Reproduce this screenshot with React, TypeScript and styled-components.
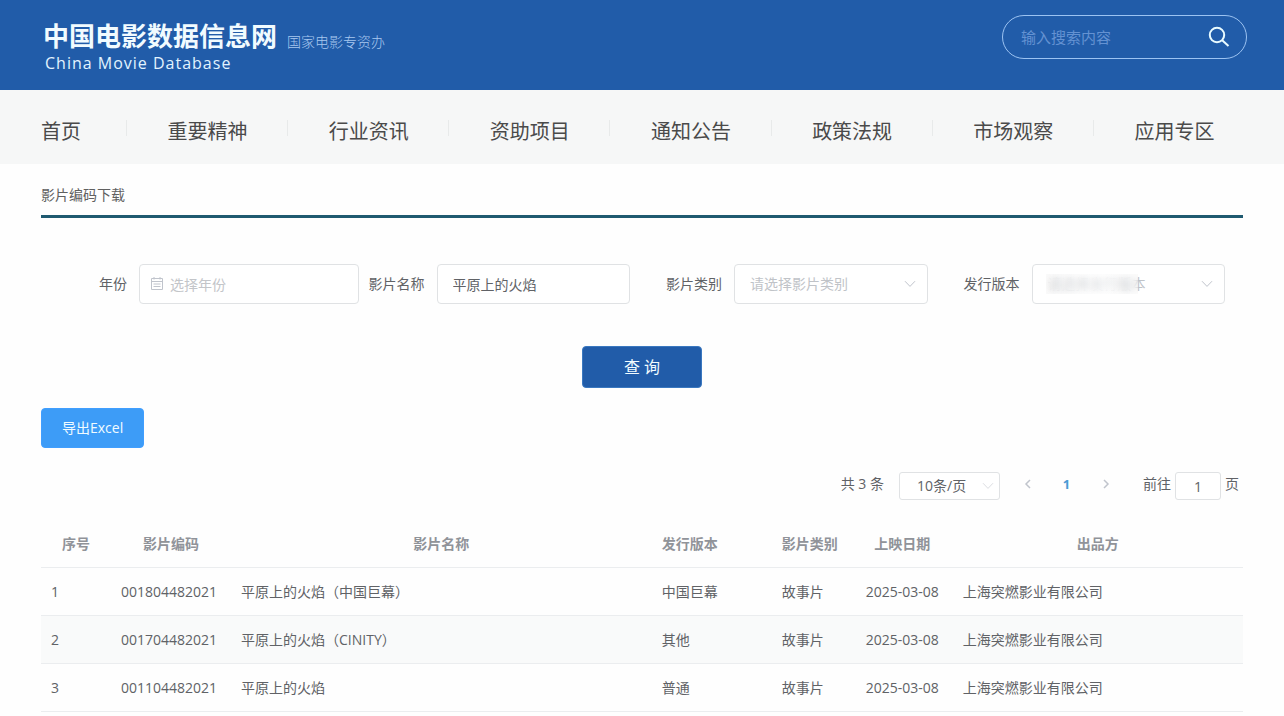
import React from 'react';
import styled, { createGlobalStyle } from 'styled-components';

const GlobalStyle = createGlobalStyle`
  *, *::before, *::after { box-sizing: border-box; }
  body {
    margin: 0;
    background: #fefefe;
    color: #606266;
    font: 14px/20px "Open Sans", "Noto Sans CJK SC", sans-serif;
  }
  button, input, select { font: inherit; color: inherit; margin: 0; }
`;

const Header = styled.header`
  display: flex;
  justify-content: space-between;
  align-items: flex-start;
  height: 90px;
  padding: 15px 37px 0 43px;
  background: #215ca9;
  color: #fff;
`;

const Brand = styled.div`
  display: grid;
  grid-template-columns: auto auto;
  column-gap: 10px;
  align-items: end;
  padding-top: 4px;
`;

const SiteName = styled.h1`
  margin: 0;
  font-size: 26px;
  line-height: 34px;
  font-weight: 700;
  color: #f1fbff;
`;

const Office = styled.span`
  line-height: 22px;
  color: #a9c8ef;
  font-weight: 300;
`;

const EnglishName = styled.span`
  padding-left: 2px;
  font-size: 16px;
  line-height: 20px;
  letter-spacing: 1px;
  color: #e2f3ff;
`;

const SearchBox = styled.form`
  display: flex;
  align-items: center;
  width: 245px;
  height: 44px;
  padding: 0 15px 0 18px;
  border: 1px solid #9cc3f2;
  border-radius: 22px;
`;

const SearchInput = styled.input`
  flex: 1;
  min-width: 0;
  padding: 0;
  border: 0;
  outline: 0;
  background: none;
  font-size: 15px;
  &::placeholder { color: #6492d2; opacity: 1; }
`;

const SearchButton = styled.button`
  display: flex;
  padding: 0;
  border: 0;
  background: none;
  color: #e9fbff;
`;

const Nav = styled.nav`
  display: grid;
  grid-template-columns: 86px repeat(7, 1fr);
  align-items: center;
  height: 74px;
  padding: 10px 29px 0 41px;
  background: #f6f7f7;
`;

const NavLink = styled.a`
  position: relative;
  text-align: center;
  text-decoration: none;
  font-size: 20px;
  line-height: 28px;
  color: #4a4a4a;
  &:first-child { text-align: left; }
  &:not(:last-child)::after {
    content: "";
    position: absolute;
    top: 2px;
    right: 0;
    width: 1px;
    height: 16px;
    background: #e8eaea;
  }
`;

const Main = styled.main`
  padding: 21px 41px 0;
`;

const PageTitle = styled.h2`
  margin: 0;
  padding-bottom: 10px;
  border-bottom: 3px solid #1f5a70;
  font-size: 14px;
  line-height: 20px;
  font-weight: 400;
  color: #606060;
`;

const Filters = styled.form`
  display: grid;
  grid-template-columns: repeat(4, minmax(0, 1fr));
  row-gap: 42px;
  margin-top: 46px;
  padding-right: 12px;
`;

const Field = styled.div`
  display: flex;
  align-items: center;
  padding-right: 6px;
`;

const Label = styled.label`
  flex: 0 0 98px;
  padding-right: 12px;
  text-align: right;
  white-space: nowrap;
`;

const Control = styled.div<{ $minWidth?: number }>`
  position: relative;
  flex: 1 0 auto;
  width: 0;
  min-width: ${p => (p.$minWidth ? `${p.$minWidth}px` : '0')};
`;

const TextInput = styled.input<{ $inset?: number }>`
  display: block;
  width: 100%;
  height: 40px;
  padding: 0 15px 0 ${p => p.$inset ?? 15}px;
  border: 1px solid #e0e2e4;
  border-radius: 4px;
  outline: 0;
  background: #fff;
  &::placeholder { color: #c3c5c9; opacity: 1; }
`;

const Select = styled.select<{ $small?: boolean }>`
  display: block;
  width: 100%;
  height: ${p => (p.$small ? 28 : 40)}px;
  padding: 0 ${p => (p.$small ? 17 : 15)}px;
  appearance: none;
  border: 1px solid #e0e2e4;
  border-radius: ${p => (p.$small ? 3 : 4)}px;
  outline: 0;
  background: #fff;
  color: ${p => (p.$small ? '#606266' : '#c0c3c8')};
`;

const ControlIcon = styled.svg<{ $side: 'left' | 'right'; $offset: number; $faint?: boolean }>`
  position: absolute;
  top: 0;
  bottom: 0;
  margin: auto 0;
  ${p => p.$side}: ${p => p.$offset}px;
  fill: none;
  stroke: ${p => (p.$faint ? '#dcdee2' : '#c0c4cc')};
  pointer-events: none;
`;

const Redaction = styled.span`
  position: absolute;
  top: 10px;
  left: 14px;
  width: 92px;
  height: 20px;
  background: linear-gradient(90deg, #eeeeee44, #ffffff66 60%, #eeeeee33);
  backdrop-filter: blur(3px);
  pointer-events: none;
`;

const QueryButton = styled.button`
  grid-column: 1 / -1;
  justify-self: center;
  width: 120px;
  height: 42px;
  margin-left: 12px;
  border: 1px solid #3a78c0;
  border-radius: 4px;
  background: #215ca9;
  font-size: 16px;
  color: #f1fbff;
`;

const ExportButton = styled.button`
  display: block;
  height: 40px;
  margin-top: 20px;
  padding: 0 20px;
  border: 1px solid #409eff;
  border-radius: 4px;
  background: #3d9cf7;
  color: #f1fbff;
`;

const Pagination = styled.div`
  display: flex;
  justify-content: flex-end;
  align-items: center;
  height: 28px;
  margin-top: 24px;
  padding-right: 4px;
  line-height: 24px;
`;

const Total = styled.span`
  height: 28px;
`;

const PageSize = styled.div`
  position: relative;
  width: 101px;
  margin: 0 8px 0 15px;
`;

const PagerButton = styled.button<{ $current?: boolean }>`
  display: flex;
  align-items: center;
  justify-content: center;
  width: 39px;
  height: 28px;
  padding: 0 0 4px;
  border: 0;
  background: none;
  font-size: 13px;
  font-weight: 700;
  color: ${p => (p.$current ? '#4a9bd4' : '#c0c4cc')};
`;

const Jump = styled.label`
  display: flex;
  align-items: flex-start;
  gap: 4px;
  height: 28px;
  margin-left: 18px;
`;

const JumpInput = styled.input`
  width: 46px;
  height: 28px;
  padding: 0;
  border: 1px solid #e0e2e4;
  border-radius: 3px;
  background: #fff;
  text-align: center;
`;

const Table = styled.table`
  width: 100%;
  margin-top: 20px;
  table-layout: fixed;
  border-collapse: separate;
  border-spacing: 0;
`;

const Cell = styled.td<{ $align?: 'left' | 'center' }>`
  height: 48px;
  padding: 0 10px;
  border-bottom: 1px solid #ebedef;
  text-align: ${p => p.$align ?? 'left'};
  white-space: nowrap;
`;

const HeadCell = styled(Cell)`
  font-weight: 700;
  color: #909399;
`;

const Row = styled.tr`
  &:nth-child(even) { background: #f9fafa; }
`;

const navItems = ['首页', '重要精神', '行业资讯', '资助项目', '通知公告', '政策法规', '市场观察', '应用专区'];

type Align = 'left' | 'center';
const columns: { title: string; width?: string; head: Align; body: Align }[] = [
  { title: '序号', width: '70px', head: 'center', body: 'left' },
  { title: '影片编码', width: '120px', head: 'center', body: 'left' },
  { title: '影片名称', width: '35%', head: 'center', body: 'left' },
  { title: '发行版本', width: '120px', head: 'left', body: 'left' },
  { title: '影片类别', width: '80px', head: 'left', body: 'left' },
  { title: '上映日期', width: '101px', head: 'center', body: 'center' },
  { title: '出品方', head: 'center', body: 'left' },
];

const films = [
  ['1', '001804482021', '平原上的火焰（中国巨幕）', '中国巨幕', '故事片', '2025-03-08', '上海突燃影业有限公司'],
  ['2', '001704482021', '平原上的火焰（CINITY）', '其他', '故事片', '2025-03-08', '上海突燃影业有限公司'],
  ['3', '001104482021', '平原上的火焰', '普通', '故事片', '2025-03-08', '上海突燃影业有限公司'],
];

const Chevron = ({ offset, faint }: { offset: number; faint?: boolean }) => (
  <ControlIcon $side="right" $offset={offset} $faint={faint} width="12" height="8" viewBox="0 0 12 8" aria-hidden="true">
    <path d="M1 1.2 6 6.4 11 1.2" />
  </ControlIcon>
);

const keepPage = (e: React.FormEvent) => e.preventDefault();

export default function App() {
  return (
    <>
      <GlobalStyle />
      <Header>
        <Brand>
          <SiteName>中国电影数据信息网</SiteName>
          <Office>国家电影专资办</Office>
          <EnglishName>China Movie Database</EnglishName>
        </Brand>
        <SearchBox onSubmit={keepPage}>
          <SearchInput type="text" placeholder="输入搜索内容" aria-label="输入搜索内容" />
          <SearchButton type="submit" aria-label="搜索">
            <svg width="24" height="24" viewBox="0 0 24 24" fill="none" stroke="currentColor" strokeWidth="2">
              <circle cx="10" cy="10" r="7.2" />
              <path d="M15.200 15.200l6.300 5.800" />
            </svg>
          </SearchButton>
        </SearchBox>
      </Header>
      <Nav>
        {navItems.map(item => (
          <NavLink href="#" key={item}>{item}</NavLink>
        ))}
      </Nav>
      <Main>
        <PageTitle>影片编码下载</PageTitle>
        <Filters onSubmit={keepPage}>
          <Field>
            <Label htmlFor="year">年份</Label>
            <Control $minWidth={220}>
              <TextInput id="year" type="text" placeholder="选择年份" $inset={30} />
              <ControlIcon $side="left" $offset={11} width="14" height="14" viewBox="0 0 14 14" aria-hidden="true">
                <path d="M1.5 1.5h11v11h-11zM1.5 4.500h11M4 0v2.500M10 0v2.500M3.500 7h7M3.500 9.500h7" />
              </ControlIcon>
            </Control>
          </Field>
          <Field>
            <Label htmlFor="title">影片名称</Label>
            <Control>
              <TextInput id="title" type="text" defaultValue="平原上的火焰" />
            </Control>
          </Field>
          <Field>
            <Label htmlFor="category">影片类别</Label>
            <Control>
              <Select id="category">
                <option>请选择影片类别</option>
              </Select>
              <Chevron offset={12} />
            </Control>
          </Field>
          <Field>
            <Label htmlFor="version">发行版本</Label>
            <Control>
              <Select id="version">
                <option>请选择发行版本</option>
              </Select>
              <Redaction />
              <Chevron offset={12} />
            </Control>
          </Field>
          <QueryButton type="submit">查 询</QueryButton>
        </Filters>
        <ExportButton type="button">导出Excel</ExportButton>
        <Pagination>
          <Total>共 3 条</Total>
          <PageSize>
            <Select $small aria-label="每页条数">
              <option>10条/页</option>
            </Select>
            <Chevron offset={6} faint />
          </PageSize>
          <PagerButton type="button" aria-label="上一页">
            <svg width="8" height="10" viewBox="0 0 8 10" fill="none" stroke="currentColor" strokeWidth="1.500"><path d="M6 1 2 5l4 4" /></svg>
          </PagerButton>
          <PagerButton type="button" $current>1</PagerButton>
          <PagerButton type="button" aria-label="下一页">
            <svg width="8" height="10" viewBox="0 0 8 10" fill="none" stroke="currentColor" strokeWidth="1.500"><path d="M2 1l4 4-4 4" /></svg>
          </PagerButton>
          <Jump>
            前往
            <JumpInput type="text" defaultValue="1" />
            页
          </Jump>
        </Pagination>
        <Table>
          <colgroup>
            {columns.map(c => (
              <col key={c.title} width={c.width} />
            ))}
          </colgroup>
          <thead>
            <tr>
              {columns.map(c => (
                <HeadCell as="th" scope="col" key={c.title} $align={c.head}>{c.title}</HeadCell>
              ))}
            </tr>
          </thead>
          <tbody>
            {films.map(film => (
              <Row key={film[0]}>
                {film.map((value, i) => (
                  <Cell key={columns[i].title} $align={columns[i].body}>{value}</Cell>
                ))}
              </Row>
            ))}
          </tbody>
        </Table>
      </Main>
    </>
  );
}
